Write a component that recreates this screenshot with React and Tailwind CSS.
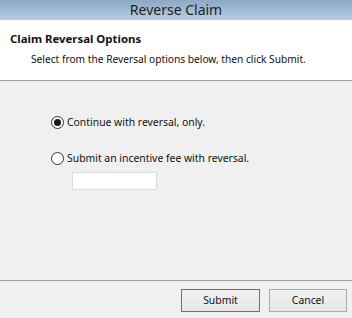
import React, { useState } from 'react';

const font = { fontFamily: '"Noto Sans", "Open Sans", sans-serif' };

const Radio = ({ checked, onClick, label }) => (
  <label className="flex items-center cursor-pointer" onClick={onClick}>
    <span className="w-[13px] h-[13px] rounded-full border border-[#333] bg-white flex items-center justify-center">
      {checked && <span className="w-[7px] h-[7px] rounded-full bg-[#1a1a1a]" />}
    </span>
    <span className="ml-[3px] text-[10.4px] text-[#111] leading-none">{label}</span>
  </label>
);

export default function App() {
  const [choice, setChoice] = useState('continue');

  return (
    <div className="w-[352px] h-[318px] flex flex-col bg-[#f0f0f0]" style={font}>
      {/* title bar */}
      <div className="h-[20px] bg-gradient-to-b from-[#8ea8c3] to-[#b6cee3] flex items-center justify-center">
        <span className="text-[14px] text-[#1e1e1e] leading-none">Reverse Claim</span>
      </div>

      {/* header */}
      <div className="h-[61px] bg-white border-b border-[#a0a0a0] pl-[10px] pt-[11px]">
        <div className="text-[11.4px] font-bold text-[#111] leading-[16px]">Claim Reversal Options</div>
        <div className="text-[10.2px] text-[#111] pl-[21px] pt-[4px] leading-[16px]">
          Select from the Reversal options below, then click Submit.
        </div>
      </div>

      {/* options */}
      <div className="flex-1 pl-[51px] pt-[35px] flex flex-col">
        <Radio checked={choice === 'continue'} onClick={() => setChoice('continue')} label="Continue with reversal, only." />
        <div className="mt-[23px]">
          <Radio checked={choice === 'fee'} onClick={() => setChoice('fee')} label="Submit an incentive fee with reversal." />
        </div>
        <input className="ml-[21px] mt-[7px] w-[85px] h-[18px] bg-white border border-[#dcdcdc] outline-none text-[11px]" />
      </div>

      {/* footer */}
      <div className="h-[38px] border-t border-[#a0a0a0] flex items-start justify-end pt-[8px] pr-[5px] gap-[9px]">
        <button className="w-[79px] h-[23px] border border-[#3c7fb1] bg-gradient-to-b from-[#f2f2f2] to-[#e6e6e6] text-[10.4px] text-[#111]">Submit</button>
        <button className="w-[78px] h-[23px] border border-[#acacac] bg-gradient-to-b from-[#f2f2f2] to-[#e6e6e6] text-[10.4px] text-[#111]">Cancel</button>
      </div>
    </div>
  );
}
